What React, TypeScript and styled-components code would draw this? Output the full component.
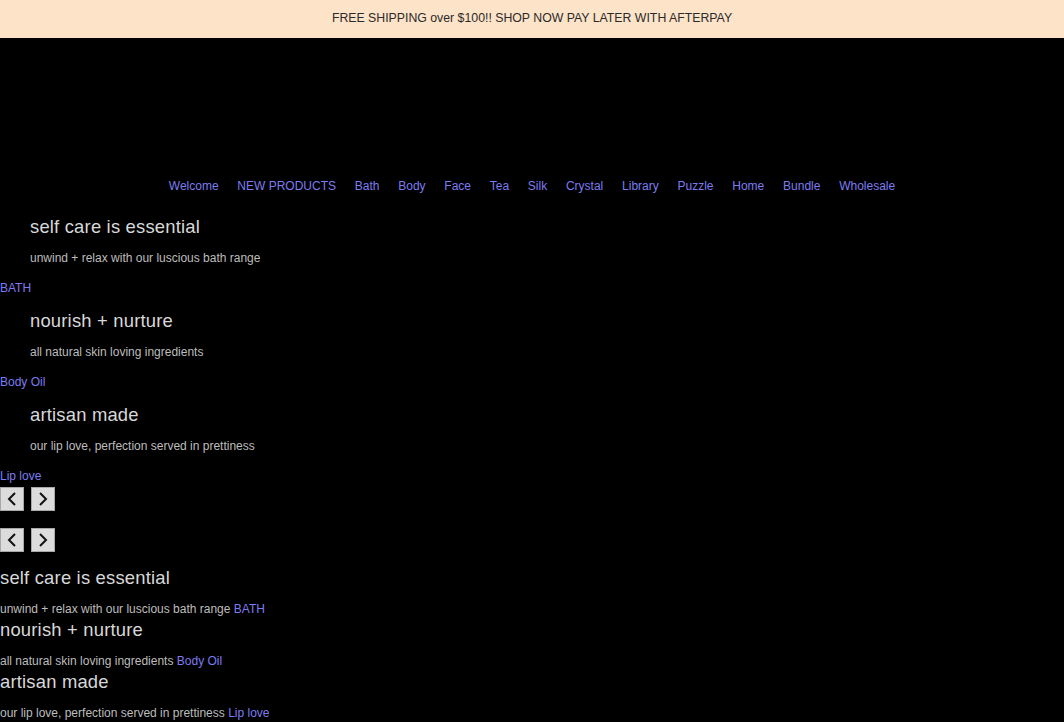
import React from "react";
import styled, { createGlobalStyle } from "styled-components";

const Global = createGlobalStyle`
  html, body { margin: 0; padding: 0; background: #000; }
  body { font-family: "Liberation Sans", Arial, sans-serif; }
  * { box-sizing: border-box; }
`;

const Page = styled.div`
  width: 1064px;
  min-height: 722px;
  background: #000;
  overflow: hidden;
`;

const Banner = styled.div`
  height: 38px;
  padding-bottom: 2px;
  background: #fde3c8;
  display: flex;
  align-items: center;
  justify-content: center;
  font-size: 12.3px;
  color: #2a2a2a;
`;

const LogoArea = styled.div`
  height: 141px;
`;

const Nav = styled.nav`
  display: flex;
  justify-content: center;
  gap: 18.75px;
  height: 14px;
  margin-bottom: 22px;
`;

const NavLink = styled.a`
  font-size: 12px;
  line-height: 14px;
  color: #7c7cf0;
  text-decoration: none;
`;

const Slider = styled.div`
  display: flex;
  flex-direction: column;
`;

const Slide = styled.div`
  display: flex;
  flex-direction: column;
  margin-bottom: 14px;
`;

const Heading = styled.h2<{ $indent?: boolean }>`
  margin: 0;
  padding-left: ${(p) => (p.$indent ? "30px" : "0")};
  font-size: 18.4px;
  font-weight: 400;
  line-height: 24px;
  height: 24px;
  color: #d8d8d8;
  letter-spacing: 0.2px;
`;

const Sub = styled.p<{ $indent?: boolean; $gap: number }>`
  margin: ${(p) => p.$gap}px 0 0;
  padding-left: ${(p) => (p.$indent ? "30px" : "0")};
  font-size: 12px;
  line-height: 14px;
  height: 14px;
  color: #bdbdbd;
`;

const SlideLink = styled.a`
  display: block;
  margin-top: 16px;
  font-size: 12px;
  line-height: 14px;
  color: #7c7cf0;
  text-decoration: none;
`;

const InlineLink = styled.a`
  font-size: 12px;
  color: #7c7cf0;
  text-decoration: none;
`;

const Controls = styled.div<{ $top: number }>`
  display: flex;
  gap: 7px;
  margin-top: ${(p) => p.$top}px;
`;

const ArrowButton = styled.button`
  width: 24px;
  height: 24px;
  padding: 0;
  background: #dcdcdc;
  border: 1px solid #a8a8a8;
  display: flex;
  align-items: center;
  justify-content: center;
`;

const Group = styled.div`
  display: flex;
  flex-direction: column;
  margin-top: 14px;
`;

const Item = styled.div`
  display: flex;
  flex-direction: column;
  margin-bottom: 2px;
`;

const Chevron = ({ dir }: { dir: "left" | "right" }) => (
  <svg width="14" height="16" viewBox="0 0 14 16">
    <path
      d={dir === "left" ? "M10 2 L4 8 L10 14" : "M4 2 L10 8 L4 14"}
      fill="none"
      stroke="#111"
      strokeWidth="2"
    />
  </svg>
);

const slides = [
  { title: "self care is essential", text: "unwind + relax with our luscious bath range", link: "BATH" },
  { title: "nourish + nurture", text: "all natural skin loving ingredients", link: "Body Oil" },
  { title: "artisan made", text: "our lip love, perfection served in prettiness", link: "Lip love" },
];

const navItems = [
  "Welcome", "NEW PRODUCTS", "Bath", "Body", "Face", "Tea", "Silk",
  "Crystal", "Library", "Puzzle", "Home", "Bundle", "Wholesale",
];

export default function App() {
  return (
    <Page>
      <Global />
      <Banner>FREE SHIPPING over $100!! SHOP NOW PAY LATER WITH AFTERPAY</Banner>
      <LogoArea />
      <Nav>
        {navItems.map((n) => (
          <NavLink key={n} href="#">{n}</NavLink>
        ))}
      </Nav>
      <Slider>
        {slides.map((s) => (
          <Slide key={s.title}>
            <Heading $indent>{s.title}</Heading>
            <Sub $indent $gap={12}>{s.text}</Sub>
            <SlideLink href="#">{s.link}</SlideLink>
          </Slide>
        ))}
      </Slider>
      <Controls $top={-10}>
        <ArrowButton><Chevron dir="left" /></ArrowButton>
        <ArrowButton><Chevron dir="right" /></ArrowButton>
      </Controls>
      <Controls $top={17}>
        <ArrowButton><Chevron dir="left" /></ArrowButton>
        <ArrowButton><Chevron dir="right" /></ArrowButton>
      </Controls>
      <Group>
        {slides.map((s) => (
          <Item key={s.title}>
            <Heading>{s.title}</Heading>
            <Sub $gap={12}>
              {s.text} <InlineLink href="#">{s.link}</InlineLink>
            </Sub>
          </Item>
        ))}
      </Group>
    </Page>
  );
}
